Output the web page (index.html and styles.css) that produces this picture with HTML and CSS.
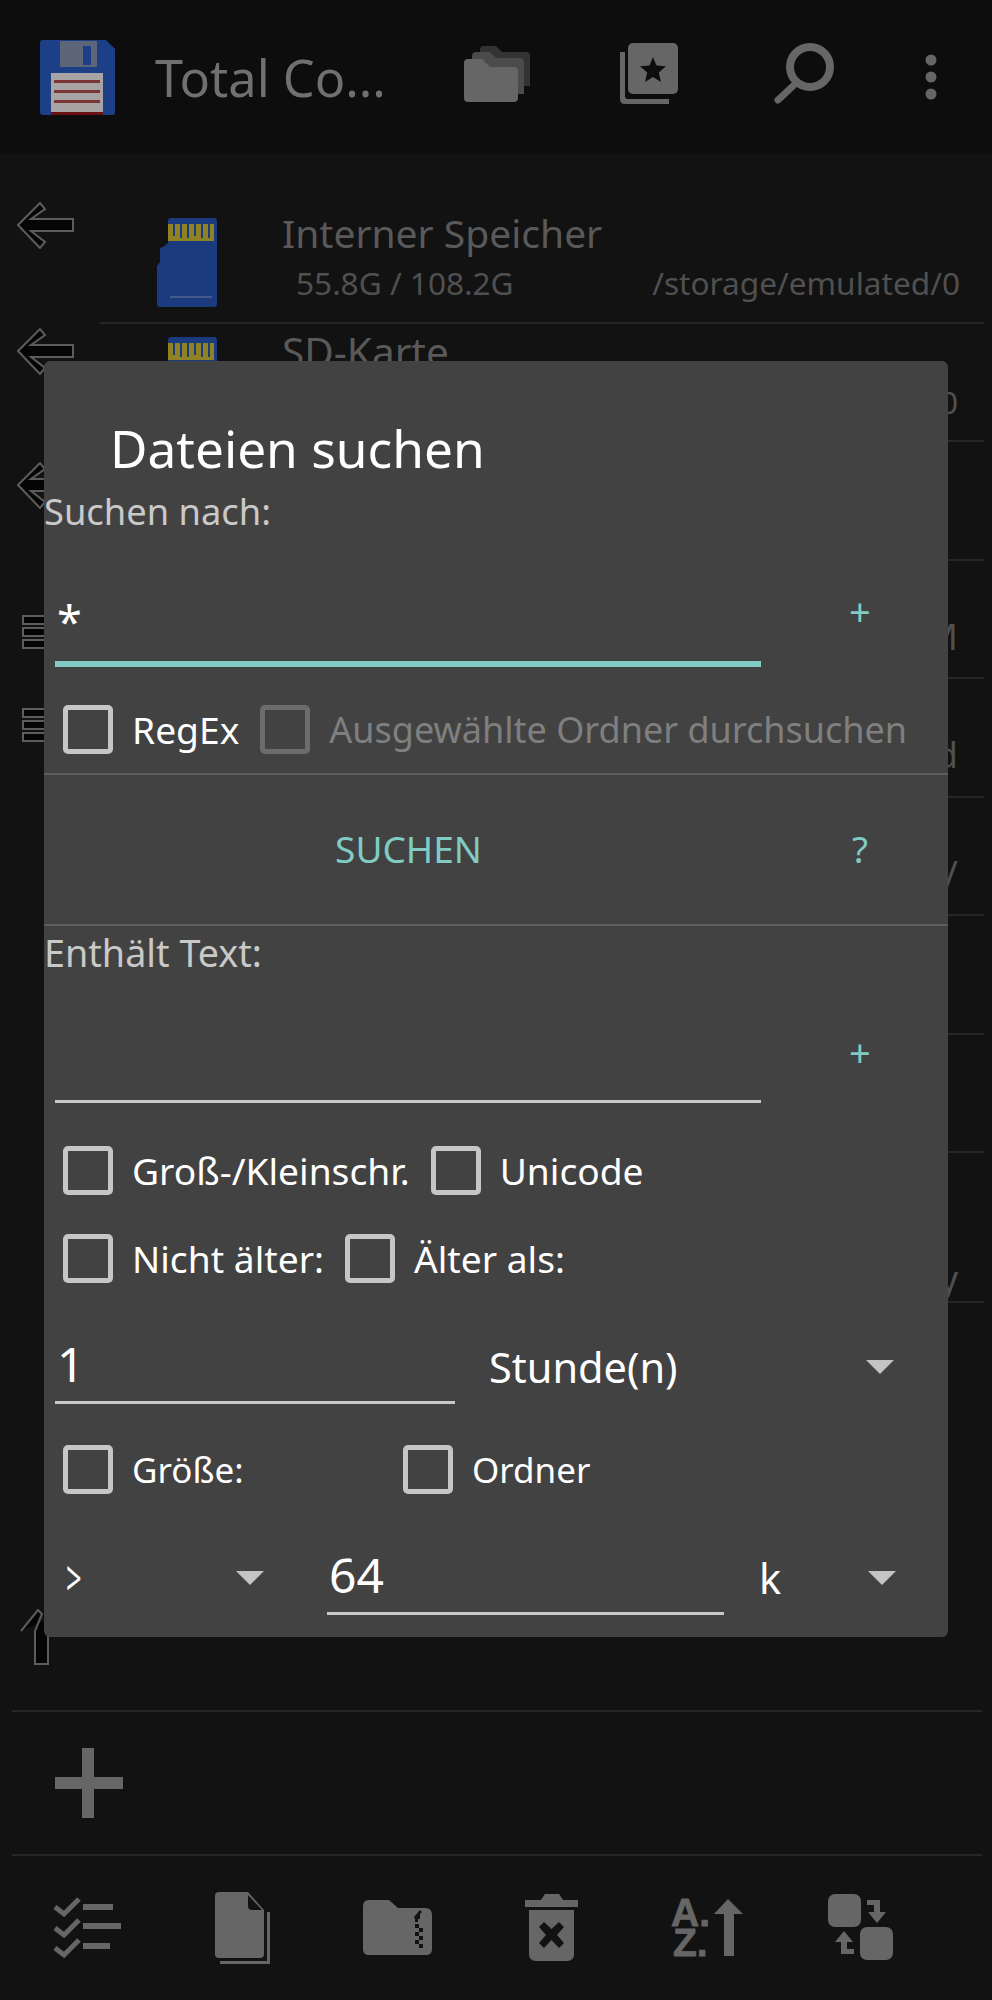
FILE: index.html
```html
<!DOCTYPE html>
<html lang="de">
<head>
<meta charset="utf-8">
<title>Total Commander</title>
<link rel="stylesheet" href="styles.css">
</head>
<body>
<div class="screen">
  <header class="toolbar">
    <svg class="logo" width="75" height="75" viewBox="0 0 75 75">
      <path class="f-blue" d="M3 0H66L75 9V72Q75 75 72 75H3Q0 75 0 72V3Q0 0 3 0Z"/>
      <rect x="20" y="1" width="37" height="26" fill="#5d6679"/>
      <rect x="43" y="6" width="8" height="19" fill="#1c3f87"/>
      <rect x="11" y="33" width="52" height="39" fill="#a8a4a4"/>
      <rect x="14" y="40" width="46" height="3" fill="#7b3535"/>
      <rect x="14" y="50" width="46" height="3" fill="#7b3535"/>
      <rect x="14" y="60" width="46" height="3" fill="#7b3535"/>
      <rect x="11" y="72" width="52" height="3" fill="#6b1010"/>
    </svg>
    <span class="app-title">Total Co...</span>
    <svg class="tb-folders" width="66" height="60" viewBox="0 0 66 60">
      <path fill="#333" d="M16 6Q16 2 20 2H32L38 8H62Q66 8 66 12V42H16Z"/>
      <path fill="#4b4b4b" d="M8 12Q8 8 12 8H26L32 14H56Q60 14 60 18V50H8Z"/>
      <path class="f-icon" d="M0 19Q0 15 4 15H18L26 23H50Q54 23 54 27V54Q54 58 50 58H4Q0 58 0 54Z"/>
    </svg>
    <svg class="tb-stars" width="58" height="62" viewBox="0 0 58 62">
      <path class="f-icon" d="M0 9H5V53Q5 56 8 56H49V61H5Q0 61 0 56Z"/>
      <rect class="f-icon" x="8" y="0" width="50" height="51" rx="5"/>
      <path fill="#0d0d0d" d="M33 14L36.500 22.500L46 23.300L38.800 29.500L41 39L33 34L25 39L27.200 29.500L20 23.300L29.500 22.500Z"/>
    </svg>
    <svg class="tb-search" width="62" height="62" viewBox="0 0 62 62">
      <circle class="s-icon" cx="37" cy="24" r="20" fill="none" stroke-width="8"/>
      <line class="s-icon" x1="20" y1="43" x2="5" y2="57" stroke-width="7" stroke-linecap="round"/>
    </svg>
    <svg class="tb-more" width="12" height="46" viewBox="0 0 12 46">
      <circle class="f-icon" cx="6" cy="6" r="5.500"/>
      <circle class="f-icon" cx="6" cy="23" r="5.500"/>
      <circle class="f-icon" cx="6" cy="40" r="5.500"/>
    </svg>
  </header>

  <main class="list">
    <div class="row row-a">
      <div class="lead"><svg class="arrow" width="57" height="47" viewBox="0 0 57 47"><path class="outlined" d="M1 23L23 1L28 7L14 17H56V29H14L28 40L23 46Z"/></svg></div>
      <div class="body">
        <svg class="card" width="60" height="90" viewBox="0 0 60 90">
          <path class="f-card" d="M11 3Q11 0 14 0H57Q60 0 60 3V86Q60 89 57 89H3Q0 89 0 86V48L3 44V32Q3 29 6 29L11 25Z"/>
          <path fill="#8f8224" d="M11 6h46v17h-46z"/>
          <path fill="#1c3a7e" d="M16 6h2v12h-2zM23 6h2v14h-2zM30 6h2v14h-2zM37 6h2v12h-2zM44 6h2v14h-2zM51 6h2v14h-2z"/>
          <rect x="13" y="78" width="42" height="2" fill="#46598f"/>
        </svg>
        <div class="name name-int">Interner Speicher</div>
        <div class="meta"><span>55.8G / 108.2G</span><span>/storage/emulated/0</span></div>
      </div>
    </div>
    <div class="row row-a">
      <div class="lead lead-second"><svg class="arrow" width="57" height="47" viewBox="0 0 57 47"><path class="outlined" d="M1 23L23 1L28 7L14 17H56V29H14L28 40L23 46Z"/></svg></div>
      <div class="body">
        <svg class="card" width="60" height="90" viewBox="0 0 60 90">
          <path class="f-card" d="M11 3Q11 0 14 0H57Q60 0 60 3V86Q60 89 57 89H3Q0 89 0 86V48L3 44V32Q3 29 6 29L11 25Z"/>
          <path fill="#8f8224" d="M11 6h46v17h-46z"/>
          <path fill="#1c3a7e" d="M16 6h2v12h-2zM23 6h2v14h-2zM30 6h2v14h-2zM37 6h2v12h-2zM44 6h2v14h-2zM51 6h2v14h-2z"/>
        </svg>
        <div class="name name-sd">SD-Karte</div>
        <div class="meta meta-end meta-zero"><span>0</span></div>
      </div>
    </div>
    <div class="row row-a row-third">
      <div class="lead"><svg class="arrow" width="57" height="47" viewBox="0 0 57 47"><path class="outlined" d="M1 23L23 1L28 7L14 17H56V29H14L28 40L23 46Z"/></svg></div>
      <div class="body"></div>
    </div>
    <div class="row row-a">
      <div class="lead lead-bars"><svg width="40" height="36" viewBox="0 0 40 36"><path class="outlined" d="M1 1H39V9H1ZM1 13H39V21H1ZM1 25H39V33H1Z"/></svg></div>
      <div class="body"><div class="meta meta-end meta-far"><span>M</span></div></div>
    </div>
    <div class="row row-a">
      <div class="lead lead-bars lead-bars-b"><svg width="40" height="36" viewBox="0 0 40 36"><path class="outlined" d="M1 1H39V9H1ZM1 13H39V21H1ZM1 25H39V33H1Z"/></svg></div>
      <div class="body"><div class="meta meta-end meta-far"><span>d</span></div></div>
    </div>
    <div class="row row-a"><div class="lead"></div><div class="body"><div class="meta meta-end meta-far"><span>/</span></div></div></div>
    <div class="row row-a"><div class="lead"></div><div class="body"></div></div>
    <div class="row row-a"><div class="lead"></div><div class="body"></div></div>
    <div class="row row-tall"><div class="lead"></div><div class="body"><div class="meta meta-end meta-low"><span>y</span></div></div></div>
    <div class="row-up">
      <svg width="32" height="56" viewBox="0 0 32 56"><path class="outlined" d="M1 22L18 1L22 5L15 22V55H28V10"/></svg>
    </div>
  </main>

  <section class="add-row">
    <svg width="68" height="70" viewBox="0 0 68 70">
      <path class="f-icon" d="M27 0H39V29H68V41H39V70H27V41H0V29H27Z"/>
    </svg>
  </section>

  <nav class="bottom-bar">
    <svg width="70" height="64" viewBox="0 0 70 64">
      <g class="s-icon" fill="none" stroke-width="5"><path d="M2 11L11 18L26 3"/><path d="M2 32L11 39L26 24"/><path d="M2 52L11 59L26 44"/></g>
      <rect class="f-icon" x="30" y="8" width="30" height="6"/>
      <rect class="f-icon" x="30" y="27" width="38" height="6"/>
      <rect class="f-icon" x="30" y="47" width="27" height="6"/>
    </svg>
    <svg width="56" height="72" viewBox="0 0 56 72">
      <path class="f-icon" d="M4 0H33L49 18V62Q49 66 45 66H4Q0 66 0 62V4Q0 0 4 0Z"/>
      <path fill="#121212" d="M33 3L47 18H37Q33 18 33 14Z"/>
      <path class="f-icon" d="M52 20H55V72H5V69H52Z"/>
    </svg>
    <svg width="70" height="56" viewBox="0 0 70 56">
      <path class="f-icon" d="M0 6Q0 0 6 0H26L35 8H62Q69 8 69 15V49Q69 55 63 55H6Q0 55 0 49Z"/>
      <path fill="#121212" d="M51 17L57 10L59 12L57 14V19H55V22H52V19Z"/>
      <path fill="#121212" d="M52 24h4v4h-4zM56 28h4v4h-4zM52 32h4v4h-4zM56 36h4v4h-4zM52 40h4v4h-4zM56 44h4v4h-4z"/>
    </svg>
    <svg class="bb-trash" width="54" height="68" viewBox="0 0 54 68">
      <path class="f-icon" d="M0 6H16L20 0H34L38 6H53V13H0Z"/>
      <path class="f-icon" d="M4 16H49V60Q49 67 42 67H11Q4 67 4 60Z"/>
      <path fill="#121212" d="M14 33L19 28L26.500 35L34 28L39 33L32 41L39 49L34 54L26.500 46L19 54L14 49L21 41Z"/>
    </svg>
    <svg class="bb-sort" width="74" height="60" viewBox="0 0 74 60">
      <text class="az" x="0" y="28">A.</text>
      <text class="az" x="2" y="58">Z.</text>
      <path class="f-icon" d="M57 1L72 16H63V58H53V16H43Z"/>
    </svg>
    <svg class="bb-swap" width="66" height="68" viewBox="0 0 66 68">
      <rect class="f-icon" x="0" y="0" width="33" height="33" rx="7"/>
      <rect class="f-icon" x="32" y="33" width="33" height="33" rx="7"/>
      <path class="f-icon" d="M39 6H52V18H58L49 29L40 18H46V11H39Z"/>
      <path class="f-icon" d="M26 60H13V48H7L16 37L25 48H19V55H26Z"/>
    </svg>
  </nav>

  <div class="dialog">
    <h1 class="dlg-title">Dateien suchen</h1>
    <div class="dlg-label">Suchen nach:</div>
    <div class="field-row fr-search">
      <div class="field field-main field-active"><span class="value value-star">*</span></div>
      <span class="side side-plus">+</span>
    </div>
    <div class="checks checks-first">
      <label class="check"><i class="box"></i>RegEx</label>
      <label class="check check-off"><i class="box"></i>Ausgewählte Ordner durchsuchen</label>
    </div>
    <hr class="rule rule-a">
    <div class="action-row">
      <span class="action">SUCHEN</span>
      <span class="side side-q">?</span>
    </div>
    <hr class="rule">
    <div class="dlg-label dlg-label-b">Enthält Text:</div>
    <div class="field-row fr-text">
      <div class="field field-main"></div>
      <span class="side side-plus">+</span>
    </div>
    <div class="checks checks-case">
      <label class="check"><i class="box"></i>Groß-/Kleinschr.</label>
      <label class="check"><i class="box"></i>Unicode</label>
    </div>
    <div class="checks checks-age">
      <label class="check"><i class="box"></i>Nicht älter:</label>
      <label class="check"><i class="box"></i>Älter als:</label>
    </div>
    <div class="field-row fr-age">
      <div class="field field-age"><span class="value">1</span></div>
      <div class="select select-unit"><span>Stunde(n)</span><i class="caret"></i></div>
    </div>
    <div class="checks checks-size">
      <label class="check check-tight check-size"><i class="box"></i>Größe:</label>
      <label class="check check-tight"><i class="box"></i>Ordner</label>
    </div>
    <div class="field-row fr-size">
      <div class="select select-op"><span class="op">&gt;</span><i class="caret"></i></div>
      <div class="field field-size"><span class="value">64</span></div>
      <div class="select select-k"><span>k</span><i class="caret"></i></div>
    </div>
  </div>
</div>
</body>
</html>
```
FILE: styles.css
```css
* { box-sizing: border-box; }
html, body { margin: 0; padding: 0; background: #121212; }
body { font-family: "Noto Sans", "Open Sans", sans-serif; }
svg { display: block; flex: none; }

.screen { position: relative; width: 992px; height: 2000px; display: flex; flex-direction: column; overflow: hidden; background: #121212; }

.f-icon { fill: #666; }
.s-icon { stroke: #666; }
.f-blue { fill: #1c3f87; }
.f-card { fill: #1c3a7e; }
.outlined { fill: #050505; stroke: #5c5c5c; stroke-width: 2; }
.az { font-family: "Liberation Sans", sans-serif; font-weight: 700; font-size: 39px; fill: #666; stroke: #666; stroke-width: .8; }
.bb-sort { overflow: visible; }

/* toolbar */
.toolbar { flex: none; height: 154px; background: #0d0d0d; display: flex; align-items: center; padding-left: 40px; }
.app-title { font-size: 50.500px; line-height: 60px; color: #707070; margin-left: 40px; width: 309px; white-space: nowrap; margin-top: 2px; }
.tb-folders { margin-top: -6px; }
.tb-stars { margin-left: 90px; margin-top: -6px; }
.tb-search { margin-left: 95px; margin-top: -6px; }
.tb-more { margin-left: 90px; margin-top: -1px; }

/* background list */
.list { flex: 1; padding-top: 51px; display: flex; flex-direction: column; min-height: 0; }
.row { display: flex; flex: none; }
.row-a { height: 118.500px; }
.row-tall { height: 150px; }
.lead { width: 100px; flex: none; padding-left: 17px; margin-top: -3px; }
.lead-second { margin-top: 4px; }
.lead-bars { padding-left: 22px; margin-top: 54px; }
.lead-bars-b { margin-top: 29px; }
.row-third .lead { margin-top: 20px; }
.body { position: relative; flex: 1; margin-right: 8px; border-bottom: 2px solid #262626; padding-left: 182px; }
.card { position: absolute; left: 57px; top: 13px; }
.name { font-size: 39px; line-height: 52px; color: #595959; white-space: nowrap; }
.name-int { margin-top: 2px; }
.name-sd { margin-top: 2px; font-size: 40.500px; }
.meta { display: flex; justify-content: space-between; font-size: 31.600px; line-height: 40px; color: #505050; padding: 4px 24px 0 14px; white-space: nowrap; }
.meta-end { justify-content: flex-end; }
.meta-zero { padding-right: 26px; }
.meta-far { margin-top: 52px; font-size: 36px; padding-right: 26px; }
.meta-low { margin-top: 102px; font-size: 36px; padding-right: 26px; }
.row-up { flex: 1; display: flex; align-items: flex-end; padding: 0 0 45px 20px; }

/* lower bars */
.add-row { flex: none; height: 146px; margin: 0 10px 0 12px; border-top: 2px solid #262626; border-bottom: 2px solid #262626; display: flex; align-items: center; padding-left: 43px; }
.bottom-bar { flex: none; height: 144px; display: grid; grid-template-columns: repeat(6, 155px); padding-left: 10px; justify-items: center; align-items: center; }
.bb-trash { margin-right: 2px; }
.bb-swap { margin-right: 4px; }

/* dialog */
.dialog { position: absolute; left: 44px; top: 361px; width: 904px; height: 1276px; background: #424242; border-radius: 6px; color: #fff; }
.dlg-title { margin: 0; padding: 53px 0 2.500px 66px; font-size: 51.400px; line-height: 68px; font-weight: 400; color: #fff; white-space: nowrap; }
.dlg-label { font-size: 36.300px; line-height: 52px; color: #c9c9c9; white-space: nowrap; }
.dlg-label-b { line-height: 54px; font-size: 37.700px; }

.field-row { display: flex; }
.field { border-bottom: 3px solid #c8c8c8; position: relative; display: flex; align-items: flex-end; }
.field-main { margin-left: 11px; width: 706px; }
.field-active { border-bottom: 6px solid #80cbc4; }
.value { font-size: 48px; line-height: 66px; padding: 0 0 4px 2px; color: #fff; }
.value-star { font-size: 45px; padding-bottom: 6px; }
.side { width: 187px; color: #80cbc4; text-align: left; font-size: 38px; line-height: 40px; padding-left: 88px; }
.fr-search { height: 130px; }
.fr-search .side-plus { margin-top: 54.500px; }
.fr-text .side-plus { margin-top: 52px; }
.fr-text { height: 123px; }
.fr-age { height: 121px; }
.fr-size { height: 121px; }
.field-age { margin-left: 11px; width: 400px; }
.field-size { width: 397px; margin-left: 63px; }

.checks { display: flex; padding-left: 19px; height: 49px; }
.checks-first { margin-top: 38px; gap: 21px; }
.checks-case { margin-top: 43px; gap: 21px; }
.checks-age { margin-top: 39px; gap: 21px; }
.checks-size { margin-top: 41px; }
.check { display: flex; align-items: center; gap: 19px; font-size: 37.200px; line-height: 49px; color: #fff; white-space: nowrap; }
.check-tight { font-size: 35px; }
.check-size { width: 340px; }
.check-off { color: #7f7f7f; font-size: 36px; }
.box { display: block; width: 50px; height: 49px; border: 5px solid #c6c6c6; border-radius: 5px; flex: none; }
.check-off .box { border-color: #6c6c6c; }

.rule { margin: 0; border: 0; height: 2px; background: #5e5e5e; }
.rule-a { margin-top: 19px; }
.action-row { height: 149.500px; display: flex; align-items: center; }
.action { width: 729px; text-align: center; color: #80cbc4; font-size: 37px; line-height: 50px; }
.side-q { font-size: 37px; width: 175px; padding-left: 79px; }

.select { display: flex; align-items: center; justify-content: space-between; height: 121px; padding-top: 46px; }
.select span { font-size: 41.500px; line-height: 60px; white-space: nowrap; }
.select-unit { margin-left: 34px; width: 405px; }
.select-op { margin-left: 22px; width: 198px; }
.select .op { display: inline-block; font-size: 42px; transform: scale(.65, 1.15); transform-origin: left center; }
.select-k { margin-left: 35px; width: 137px; }
.caret { display: block; width: 0; height: 0; border-left: 14px solid transparent; border-right: 14px solid transparent; border-top: 14px solid #c4c4c4; }
```
